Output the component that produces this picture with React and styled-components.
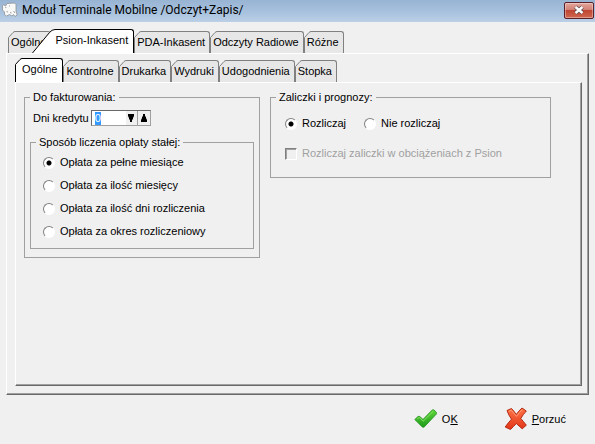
import { useEffect, useRef, useState } from "react";
import styled, { createGlobalStyle, css } from "styled-components";

const mainTabs = ["Ogólne", "Psion-Inkasent", "PDA-Inkasent", "Odczyty Radiowe", "Różne"];
const subTabs = ["Ogólne", "Kontrolne", "Drukarka", "Wydruki", "Udogodnienia", "Stopka"];
const feeModes = [
  "Opłata za pełne miesiące",
  "Opłata za ilość miesięcy",
  "Opłata za ilość dni rozliczenia",
  "Opłata za okres rozliczeniowy",
];
const advanceModes = ["Rozliczaj", "Nie rozliczaj"];

function Tab({ label, active, slope, onClick }) {
  const width = slope && active ? 23 : 7;
  const height = active ? 24 : 22;
  const path =
    slope && active
      ? "M0.5 24 L17.5 3.5 Q20 0.5 23 0.5"
      : `M0.5 ${height} V6.5 L5 1.5 Q6 0.5 7 0.5`;

  return (
    <TabButton
      type="button"
      role="tab"
      aria-selected={active}
      $active={active}
      $slope={slope && active}
      onClick={onClick}
    >
      <TabEdge width={width} height={height} viewBox={`0 0 ${width} ${height}`} $active={active}>
        <path className="face" d={`${path} V${height} Z`} />
        <path className="line" d={path} />
      </TabEdge>
      <TabFace $active={active}>
        <span>{label}</span>
      </TabFace>
    </TabButton>
  );
}

function Tabs({ items, value, onChange, slope }) {
  return (
    <TabList role="tablist">
      {items.map((item, i) => (
        <Tab
          key={item}
          label={item}
          slope={slope}
          active={value === i}
          onClick={() => onChange(i)}
        />
      ))}
    </TabList>
  );
}

function RadioOptions({ name, items, value, onChange }) {
  return items.map((item, i) => (
    <Option key={item}>
      <Radio type="radio" name={name} checked={value === i} onChange={() => onChange(i)} />
      {item}
    </Option>
  ));
}

function App() {
  const [mainTab, setMainTab] = useState(1);
  const [subTab, setSubTab] = useState(0);
  const [days, setDays] = useState(0);
  const [feeMode, setFeeMode] = useState(0);
  const [advanceMode, setAdvanceMode] = useState(0);
  const daysInput = useRef(null);

  useEffect(() => {
    daysInput.current.focus();
    daysInput.current.select();
  }, []);

  return (
    <>
      <GlobalStyle />
      <Window>
        <TitleBar>
          <AppIcon />
          <Title>Moduł Terminale Mobilne /Odczyt+Zapis/</Title>
          <CloseButton type="button" aria-label="Zamknij">
            <svg width="12" height="10" viewBox="0 0 12 10">
              <path d="M2.5 2 L9.5 8 M9.5 2 L2.5 8" stroke="#5d4a50" strokeWidth="4" />
              <path d="M2.5 2 L9.5 8 M9.5 2 L2.5 8" stroke="#fff" strokeWidth="2.4" />
            </svg>
          </CloseButton>
        </TitleBar>
        <Body>
          <Tabs items={mainTabs} value={mainTab} onChange={setMainTab} slope />
          <Panel>
            <Tabs items={subTabs} value={subTab} onChange={setSubTab} />
            <SubPanel>
              <BillingGroup>
                <Legend>Do fakturowania:</Legend>
                <CreditRow>
                  <label htmlFor="days">Dni kredytu</label>
                  <Spinner>
                    <SpinInput
                      id="days"
                      ref={daysInput}
                      value={days}
                      onChange={(e) => setDays(Number(e.target.value) || 0)}
                    />
                    <SpinButton
                      type="button"
                      aria-label="Mniej"
                      onClick={() => setDays(Math.max(0, days - 1))}
                    >
                      <svg width="6" height="8" viewBox="0 0 6 8">
                        <path d="M0 0 H6 V2 L5 4 V5 L4 6 V8 H2 V6 L1 5 V4 L0 2 Z" />
                      </svg>
                    </SpinButton>
                    <SpinButton type="button" aria-label="Więcej" onClick={() => setDays(days + 1)}>
                      <svg width="6" height="8" viewBox="0 0 6 8">
                        <path d="M0 8 H6 V6 L5 4 V3 L4 2 V0 H2 V2 L1 3 V4 L0 6 Z" />
                      </svg>
                    </SpinButton>
                  </Spinner>
                </CreditRow>
                <FeeGroup>
                  <Legend>Sposób liczenia opłaty stałej:</Legend>
                  <OptionColumn>
                    <RadioOptions
                      name="fee"
                      items={feeModes}
                      value={feeMode}
                      onChange={setFeeMode}
                    />
                  </OptionColumn>
                </FeeGroup>
              </BillingGroup>
              <AdvanceGroup>
                <Legend>Zaliczki i prognozy:</Legend>
                <OptionRow>
                  <RadioOptions
                    name="advance"
                    items={advanceModes}
                    value={advanceMode}
                    onChange={setAdvanceMode}
                  />
                </OptionRow>
                <CheckOption>
                  <Checkbox type="checkbox" disabled />
                  Rozliczaj zaliczki w obciążeniach z Psion
                </CheckOption>
              </AdvanceGroup>
            </SubPanel>
          </Panel>
        </Body>
        <Footer>
          <ActionButton type="button">
            <OkIcon />
            <span>
              O<u>K</u>
            </span>
          </ActionButton>
          <ActionButton type="button">
            <CancelIcon />
            <span>
              <u>P</u>orzuć
            </span>
          </ActionButton>
        </Footer>
      </Window>
    </>
  );
}

function AppIcon() {
  return (
    <svg width="16" height="16" viewBox="0 0 16 16">
      <path
        d="M0.5 4 L1.5 2.5 L3.5 4 L5 1.5 L12.5 1 L14 2.5 L14 9 L15.2 13 L13 14.5 L11.5 12.5 L10 14 L7.5 12.5 L4.5 14 L2.5 12.5 L2.5 10 L0.5 8 Z"
        fill="#f8f8f6"
        stroke="#8a8f94"
        strokeWidth="0.8"
      />
      <path
        d="M3.5 5 L4 6 M7 4 H8 M4.5 9.5 L6 10 M11.5 9 L13 11 M8 10.5 L9.5 11"
        fill="none"
        stroke="#9ba0a5"
      />
    </svg>
  );
}

function OkIcon() {
  return (
    <svg width="24" height="24" viewBox="0 0 24 24">
      <defs>
        <linearGradient id="ok" x1="0" y1="0" x2="0" y2="1">
          <stop offset="0" stopColor="#5fd63b" />
          <stop offset="1" stopColor="#1f9a1c" />
        </linearGradient>
      </defs>
      <path
        d="M0.8 12.5 L4 9.5 Q5 8.9 6 9.7 L9 12.4 L18.2 3 Q19.2 2.3 20 3 L22.3 5.2 Q22.9 6.2 22.2 7.2 L10.3 19.9 Q9.2 20.8 8.2 19.9 Z"
        fill="url(#ok)"
        stroke="#23931d"
        strokeWidth="0.8"
      />
      <path d="M3 12.2 L5.2 10.4 L9.2 14.2 L19.3 4.2" fill="none" stroke="#8be668" strokeWidth="0.9" />
    </svg>
  );
}

function CancelIcon() {
  return (
    <svg width="24" height="24" viewBox="0 0 24 24">
      <defs>
        <linearGradient id="cancel" x1="0" y1="0" x2="0" y2="1">
          <stop offset="0" stopColor="#ff7547" />
          <stop offset="1" stopColor="#e23417" />
        </linearGradient>
      </defs>
      <path
        d="M3 3.5 L7.5 1.5 Q9.5 3.5 12.3 7.5 Q14.5 4 18 1 L22.3 4 Q19 7.5 16.8 11.5 Q19.5 14.5 22.3 18.2 L18.2 21.8 Q15 19 12.3 16.5 Q9.5 19.5 6.5 22.5 L1.2 20 Q4 16 7.5 12.2 Q4.8 8.5 3 3.5 Z"
        fill="url(#cancel)"
        stroke="#b32a13"
        strokeLinejoin="round"
      />
      <path d="M4.8 4.4 L7.3 3.2 Q9.5 6 12.5 9.4 Q15.5 5 18.2 2.8" fill="none" stroke="#ffa27f" strokeWidth="0.9" />
    </svg>
  );
}

const GlobalStyle = createGlobalStyle`
  * {
    box-sizing: border-box;
  }

  body {
    margin: 0;
    background-color: #f0f0f0;
  }

  body, button, input {
    font-family: "Liberation Sans", Arial, sans-serif;
    font-size: 11px;
    line-height: 13px;
    color: #000;
  }
`;

const Window = styled.div`
  display: flex;
  flex-direction: column;
  min-height: 100vh;
`;

const TitleBar = styled.header`
  display: flex;
  align-items: center;
  height: 22px;
  padding: 0 1px 2px 2px;
  background-image: linear-gradient(#98b4d3, #a9c3df 60%, #bcd0e6);
`;

const Title = styled.h1`
  flex: 1;
  margin: 0 0 0 4px;
  font-family: Roboto, "Open Sans", sans-serif;
  font-size: 12px;
  font-weight: 400;
  line-height: 18px;
`;

const CloseButton = styled.button`
  display: flex;
  align-items: center;
  justify-content: center;
  width: 30px;
  height: 17px;
  padding: 0;
  border: 1px solid #5a1f28;
  border-radius: 2px;
  background-image: linear-gradient(#e3a79c, #d28075 45%, #bf4632 50%, #d0674f);
  box-shadow: inset 0 0 0 1px rgba(255, 255, 255, 0.35);
`;

const Body = styled.main`
  display: flex;
  flex: 1;
  flex-direction: column;
  padding: 7px 6px 0;
`;

const TabList = styled.div`
  display: flex;
  align-items: flex-end;
  height: 24px;
  padding-left: 2px;
`;

const TabButton = styled.button`
  position: relative;
  z-index: ${({ $active }) => ($active ? 1 : 0)};
  display: flex;
  flex: none;
  margin-left: ${({ $slope }) => ($slope ? "-19px" : 0)};
  padding: 0;
  border: 0;
  background: none;
`;

const TabEdge = styled.svg`
  flex: none;

  .face {
    fill: ${({ $active }) => ($active ? "#fff" : "#e7e7e7")};
  }

  .line {
    fill: none;
    stroke: ${({ $active }) => ($active ? "#000" : "#808080")};
  }
`;

const TabFace = styled.span`
  height: ${({ $active }) => ($active ? 24 : 22)}px;
  padding: 4px 4px 0 0;
  border-top: 1px solid #808080;
  border-right: 1px solid #808080;
  border-top-right-radius: 3px;
  background-color: #e7e7e7;

  span {
    margin-left: -4px;
  }

  ${({ $active }) =>
    $active &&
    css`
      padding-right: 5px;
      border-color: #000;
      background-color: #fff;

      span {
        margin-left: 0;
      }
    `}
`;

const Panel = styled.section`
  display: flex;
  flex: 1;
  flex-direction: column;
  padding: 4px 6px 8px;
  border: 1px solid #fff;
  border-right-color: #696969;
  border-bottom-color: #696969;
  box-shadow: inset -1px -1px #a0a0a0;
`;

const SubPanel = styled.div`
  display: flex;
  flex: 1;
  align-items: flex-start;
  gap: 10px;
  margin-left: 2px;
  padding: 8px;
  border: 1px solid #fff;
  border-right-color: #696969;
  border-bottom-color: #696969;
  box-shadow: inset -1px -1px #a0a0a0;
`;

const Group = styled.fieldset`
  min-width: 0;
  margin: 0;
  border: 1px solid #a0a0a0;
`;

const BillingGroup = styled(Group)`
  flex: 0 0 236px;
  padding: 6px 5px 8px;
`;

const FeeGroup = styled(Group)`
  margin-top: 10px;
  padding: 7px 5px 10px;
`;

const AdvanceGroup = styled(Group)`
  flex: 0 0 281px;
  padding: 13px 5px 17px;
`;

const Legend = styled.legend`
  padding: 0 3px;
`;

const CreditRow = styled.div`
  display: flex;
  align-items: center;
  gap: 2px;
  padding-left: 3px;
`;

const Spinner = styled.div`
  display: flex;
  width: 60px;
  height: 16px;
  border: 1px solid #a0a0a0;
  border-top-color: #696969;
  border-left-color: #696969;
`;

const SpinInput = styled.input`
  flex: 1;
  min-width: 0;
  padding: 0 3px;
  border: 0;
  outline: 0;
  background-color: #fff;

  &::selection {
    background-color: #3399ff;
    color: #fff;
  }
`;

const SpinButton = styled.button`
  display: flex;
  flex: 0 0 12px;
  align-items: center;
  justify-content: center;
  padding: 0;
  border: 0;
  border-right: 1px solid #a0a0a0;
  background-color: #f0f0f0;

  &:last-child {
    border-right: 0;
  }
`;

const Option = styled.label`
  display: flex;
  align-items: center;
  gap: 5px;
`;

const OptionColumn = styled.div`
  display: flex;
  flex-direction: column;
  gap: 10px;
  padding-left: 7px;
`;

const OptionRow = styled.div`
  display: flex;
  gap: 18px;
  padding-left: 9px;
`;

const CheckOption = styled(Option)`
  margin-top: 17px;
  padding-left: 9px;
  color: #a0a0a0;
`;

const Radio = styled.input`
  width: 12px;
  height: 12px;
  margin: 0;
  border: 1px solid #fff;
  border-top-color: #808080;
  border-left-color: #808080;
  border-radius: 50%;
  appearance: none;
  background-color: #fff;

  &:checked {
    background-image: radial-gradient(circle, #000 2px, transparent 3px);
  }
`;

const Checkbox = styled.input`
  width: 12px;
  height: 12px;
  margin: 0;
  border: 1px solid #fff;
  border-top-color: #808080;
  border-left-color: #808080;
  appearance: none;
  background-color: #f0f0f0;
  box-shadow: inset 1px 1px #a0a0a0;
`;

const Footer = styled.footer`
  display: flex;
  justify-content: flex-end;
  gap: 46px;
  padding: 12px 29px 13px;
`;

const ActionButton = styled.button`
  display: flex;
  align-items: center;
  gap: 4px;
  padding: 0;
  border: 0;
  background: none;
`;

export default App;
